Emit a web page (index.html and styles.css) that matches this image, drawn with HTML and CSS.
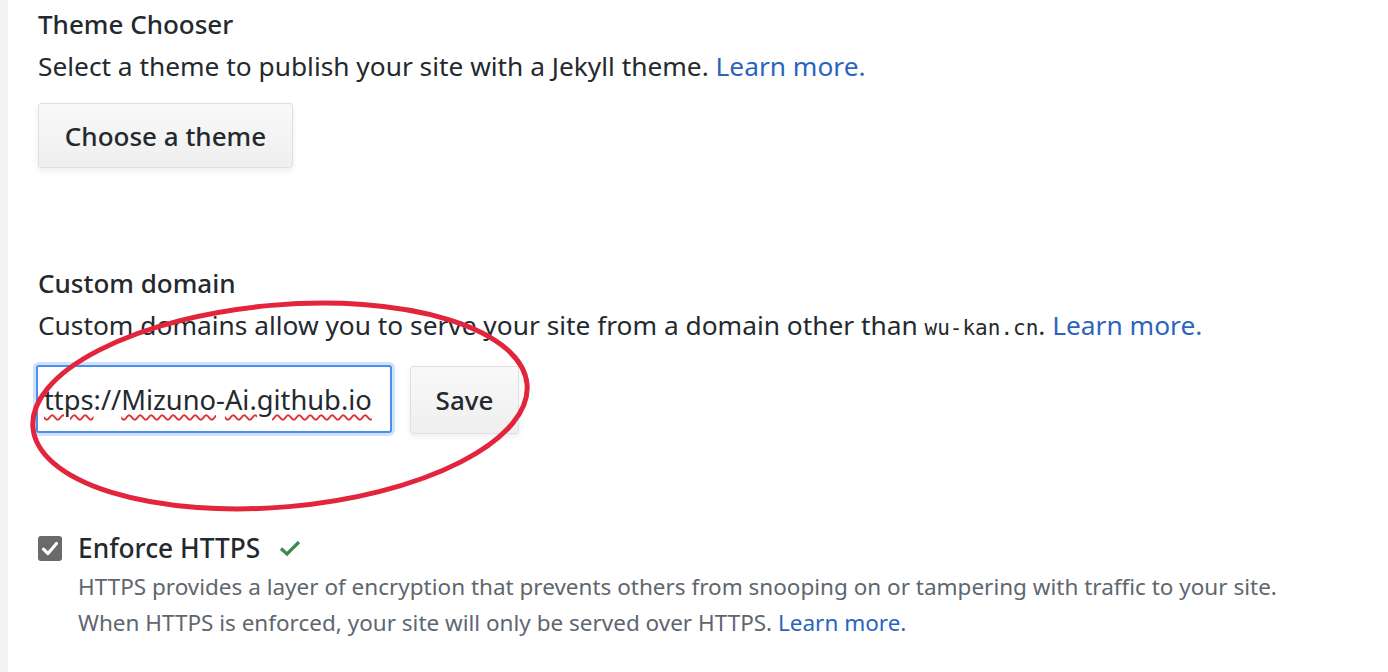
FILE: index.html
```html
<!DOCTYPE html>
<html>
<head>
<meta charset="utf-8">
<link rel="stylesheet" href="styles.css">
</head>
<body>
<div class="page">
  <section class="block">
    <h3 class="title">Theme Chooser</h3>
    <p class="desc">Select a theme to publish your site with a Jekyll theme. <a class="link" href="#">Learn more.</a></p>
    <button class="btn btn-theme">Choose a theme</button>
  </section>

  <section class="block block-domain">
    <h3 class="title">Custom domain</h3>
    <p class="desc">Custom domains allow you to serve your site from a domain other than <code class="mono">wu-kan.cn</code>. <a class="link" href="#">Learn more.</a></p>
    <div class="form-row">
      <div class="field"><span class="spell">ttps</span>://<span class="spell">Mizuno</span>-<span class="spell">Ai.github.io</span></div>
      <button class="btn btn-save">Save</button>
    </div>
    <svg class="circle" width="560" height="280" viewBox="0 0 560 280">
      <ellipse cx="280" cy="144" rx="248" ry="101" transform="rotate(-5 280 144)" fill="none" stroke="#e2253c" stroke-width="5"/>
    </svg>
  </section>

  <section class="block block-https">
    <div class="check-row">
      <span class="checkbox">
        <svg width="24" height="25" viewBox="0 0 24 25"><rect x="0" y="0" width="24" height="25" rx="3" fill="#6a6a6a"/><path d="M5.5 13.2 L10 17.5 L18.5 7.5" fill="none" stroke="#fff" stroke-width="3.2" stroke-linecap="round" stroke-linejoin="round"/></svg>
      </span>
      <span class="label">Enforce HTTPS</span>
      <svg class="ok" width="22" height="18" viewBox="0 0 22 18"><path d="M2 9.5 L8 15 L20 3" fill="none" stroke="#3b8a4e" stroke-width="3.2" stroke-linejoin="miter"/></svg>
    </div>
    <p class="note">HTTPS provides a layer of encryption that prevents others from snooping on or tampering with traffic to your site.<br>When HTTPS is enforced, your site will only be served over HTTPS. <a class="link" href="#">Learn more.</a></p>
  </section>
</div>
</body>
</html>
```

FILE: styles.css
```css
html, body {
  margin: 0;
  padding: 0;
  background: #ffffff;
}
body {
  width: 1388px;
  height: 672px;
  overflow: hidden;
  font-family: "Noto Sans", "Open Sans", sans-serif;
  color: #24292e;
}
.page {
  border-left: 8px solid #f3f3f3;
  min-height: 672px;
  padding: 3px 0 0 30px;
  box-sizing: border-box;
}
.block {
  position: relative;
}
.title {
  margin: 0;
  font-size: 26px;
  font-weight: 500;
  line-height: 42px;
  color: #24292e;
}
.desc {
  margin: 0;
  font-size: 26.3px;
  line-height: 42px;
  color: #24292e;
}
.link {
  color: #2b64bd;
  text-decoration: none;
}
.mono {
  font-family: "DejaVu Sans Mono", "Liberation Mono", monospace;
  font-size: 21px;
}
.btn {
  font-family: "Noto Sans", "Open Sans", sans-serif;
  font-size: 26px;
  font-weight: 500;
  color: #24292e;
  background: linear-gradient(#f9f9f9, #efefef);
  border: 1px solid #e0e0e0;
  border-radius: 3px;
  box-shadow: 0 3px 6px rgba(0,0,0,0.07);
  cursor: pointer;
}
.btn-theme {
  margin-top: 16px;
  width: 255px;
  height: 65px;
  padding: 0;
}
.block-domain {
  margin-top: 94px;
}
.form-row {
  display: flex;
  align-items: flex-start;
  gap: 18px;
  margin-top: 16px;
  margin-left: -2px;
}
.field {
  width: 356px;
  height: 68px;
  box-sizing: border-box;
  border: 2px solid #4d8ee8;
  border-radius: 3px;
  box-shadow: 0 0 0 3px rgba(120,170,240,0.35);
  padding: 0 0 0 6px;
  font-size: 27.3px;
  line-height: 66px;
  color: #24292e;
  white-space: nowrap;
  overflow: hidden;
  background: #fff;
}
.spell {
  text-decoration: underline wavy #e0303a;
  text-decoration-thickness: 1.5px;
  text-underline-offset: 4px;
}
.btn-save {
  width: 109px;
  height: 68px;
  padding: 0;
  margin-top: 1px;
}
.circle {
  position: absolute;
  left: -38px;
  top: 0;
  pointer-events: none;
}
.block-https {
  margin-top: 93px;
}
.check-row {
  display: flex;
  align-items: center;
  height: 42px;
}
.checkbox {
  display: flex;
  width: 24px;
  height: 25px;
}
.label {
  margin-left: 16px;
  font-size: 26.3px;
  font-weight: 500;
  line-height: 42px;
}
.ok {
  margin-left: 19px;
}
.note {
  margin: 0 0 0 40px;
  font-size: 22.5px;
  line-height: 36px;
  color: #60666e;
}
```
